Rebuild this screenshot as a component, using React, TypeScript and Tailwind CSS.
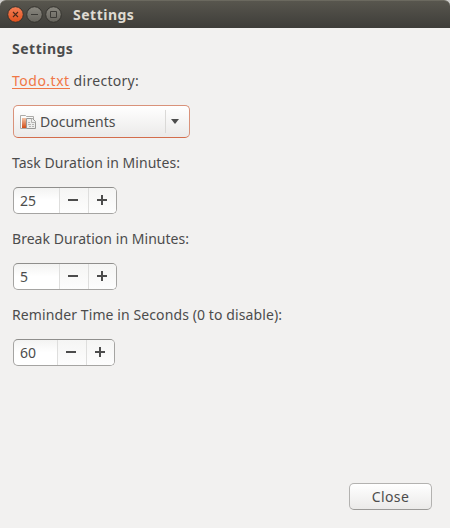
import React from "react";

function WindowButton({ kind }: { kind: "close" | "minimize" | "maximize" }) {
  const close = kind === "close";
  return (
    <button aria-label={kind} className="block h-[17px] w-[17px]">
      <svg viewBox="0 0 17 17" className="block h-[17px] w-[17px]">
        <defs>
          <linearGradient id={kind} x1="0" y1="0" x2="0" y2="1">
            <stop offset="0" stopColor={close ? "#f58057" : "#8a8880"} />
            <stop offset="1" stopColor={close ? "#e0501c" : "#66645d"} />
          </linearGradient>
        </defs>
        <circle cx="8.5" cy="8.5" r="7.8" fill={`url(#${kind})`} stroke="#34332e" />
        {close && <path d="M6 6l5 5M11 6l-5 5" stroke="#4b2a1b" strokeWidth="1.1" />}
        {kind === "minimize" && <path d="M5 8.5h7" stroke="#3c3b37" />}
        {kind === "maximize" && <path d="M5.5 5.5h6v6h-6z" fill="none" stroke="#3c3b37" />}
      </svg>
    </button>
  );
}

function Spin({ value, compact = false }: { value: string; compact?: boolean }) {
  return (
    <div className="flex h-[27px] w-fit overflow-hidden rounded-[5px] border border-[#a5a4a2] border-t-[#8f8e8c] bg-linear-to-b from-[#f3f3f2] to-white to-50%">
      <div className={`${compact ? "w-[43px]" : "w-[45px]"} pl-[6px] leading-[26px] tracking-[-0.05px]`}>{value}</div>
      <button aria-label="Decrease" className="w-[29px] border-l border-[#dededd] bg-linear-to-b from-[#f5f5f4] to-[#fdfdfd]">
        <svg viewBox="0 0 28 25" className="block h-[25px] w-[28px]"><path d="M8 12h10" stroke="#4c4c4c" strokeWidth="2" /></svg>
      </button>
      <button aria-label="Increase" className="w-[28px] border-l border-[#dededd] bg-linear-to-b from-[#f5f5f4] to-[#fdfdfd]">
        <svg viewBox="0 0 27 25" className="block h-[25px] w-[27px]"><path d="M8 12h10M13 7v10" stroke="#4c4c4c" strokeWidth="2" /></svg>
      </button>
    </div>
  );
}

export default function App() {
  return (
    <div className="flex h-[528px] w-[450px] flex-col bg-[#f2f1f0] font-['Noto_Sans','Open_Sans',sans-serif] text-[14px] leading-[20px] text-[#4c4c4c]">
      <header className="h-[28px] bg-[#d0cfcd]">
        <div className="flex h-[28px] items-center gap-[2px] rounded-t-[6px] border-t border-[#6b695f] bg-linear-to-b from-[#58564e] to-[#3e3d39] pl-[7px]">
          <WindowButton kind="close" />
          <WindowButton kind="minimize" />
          <WindowButton kind="maximize" />
          <h1 className="ml-[9px] text-[14px] font-bold tracking-[0.5px] text-[#dfdbd2]">Settings</h1>
        </div>
      </header>
      <main className="flex flex-1 flex-col pt-[11px] pr-[18px] pb-[18px] pl-[12px]">
        <h2 className="h-[20px] font-bold tracking-[0.5px]">Settings</h2>
        <p className="mt-[12px] h-[20px] tracking-[0.3px]">
          <a className="inline-block h-[18px] border-b border-[#f07746] leading-[20px] tracking-[0.5px] text-[#f07746]">Todo.txt</a> directory:
        </p>
        <button className="mt-[14px] ml-[1px] flex h-[33px] w-[177px] items-center rounded-[5px] border border-[#d9927a] border-b-[#d36d4c] bg-linear-to-b from-white to-[#ebeae9] pl-[6px]">
          <svg viewBox="0 0 17 16" className="mr-[3px] h-[16px] w-[17px]">
            <defs>
              <linearGradient id="folder" x1="0" y1="0" x2="0" y2="1">
                <stop offset="0" stopColor="#f3c3a6" />
                <stop offset="1" stopColor="#d34c16" />
              </linearGradient>
            </defs>
            <path d="M.5 14.5v-13h5l1 1h7v3" fill="#fafaf9" stroke="#aaa9a7" />
            <path d="M2 4h4v10H2z" fill="url(#folder)" />
            <path d="M.5 14.5h6" stroke="#aaa9a7" />
            <path d="M6.5 4.5h6l3 3v7h-9z" fill="#eeeeed" stroke="#999997" />
            <path d="M11.5 4.5v4h4M8 8.5h2M8 10.5h3m1 0h2M9 12.5h2m1 0h2" fill="none" stroke="#b5b4b2" />
          </svg>
          <span>Documents</span>
          <span className="mr-[5px] ml-auto h-[23px] w-px bg-[#dad9d7]" />
          <svg viewBox="0 0 8 5" className="mr-[10px] h-[5px] w-[8px]"><path d="M0 0h8L4 5z" fill="#4c4c4c" /></svg>
        </button>
        <label className="mt-[15px] h-[20px] tracking-[0.04px]">Task Duration in Minutes:</label>
        <div className="mt-[14px] ml-[1px]"><Spin value="25" /></div>
        <label className="mt-[15px] h-[20px] tracking-[0.04px]">Break Duration in Minutes:</label>
        <div className="mt-[14px] ml-[1px]"><Spin value="5" /></div>
        <label className="mt-[15px] h-[20px] tracking-[0.1px]">Reminder Time in Seconds (0 to disable):</label>
        <div className="mt-[14px] ml-[1px]"><Spin value="60" compact /></div>
        <button className="mt-auto ml-auto h-[27px] w-[83px] rounded-[5px] border border-[#b3b2b0] border-b-[#9b9a98] bg-linear-to-b from-white to-[#ebeae9] tracking-[0.4px]">Close</button>
      </main>
    </div>
  );
}
